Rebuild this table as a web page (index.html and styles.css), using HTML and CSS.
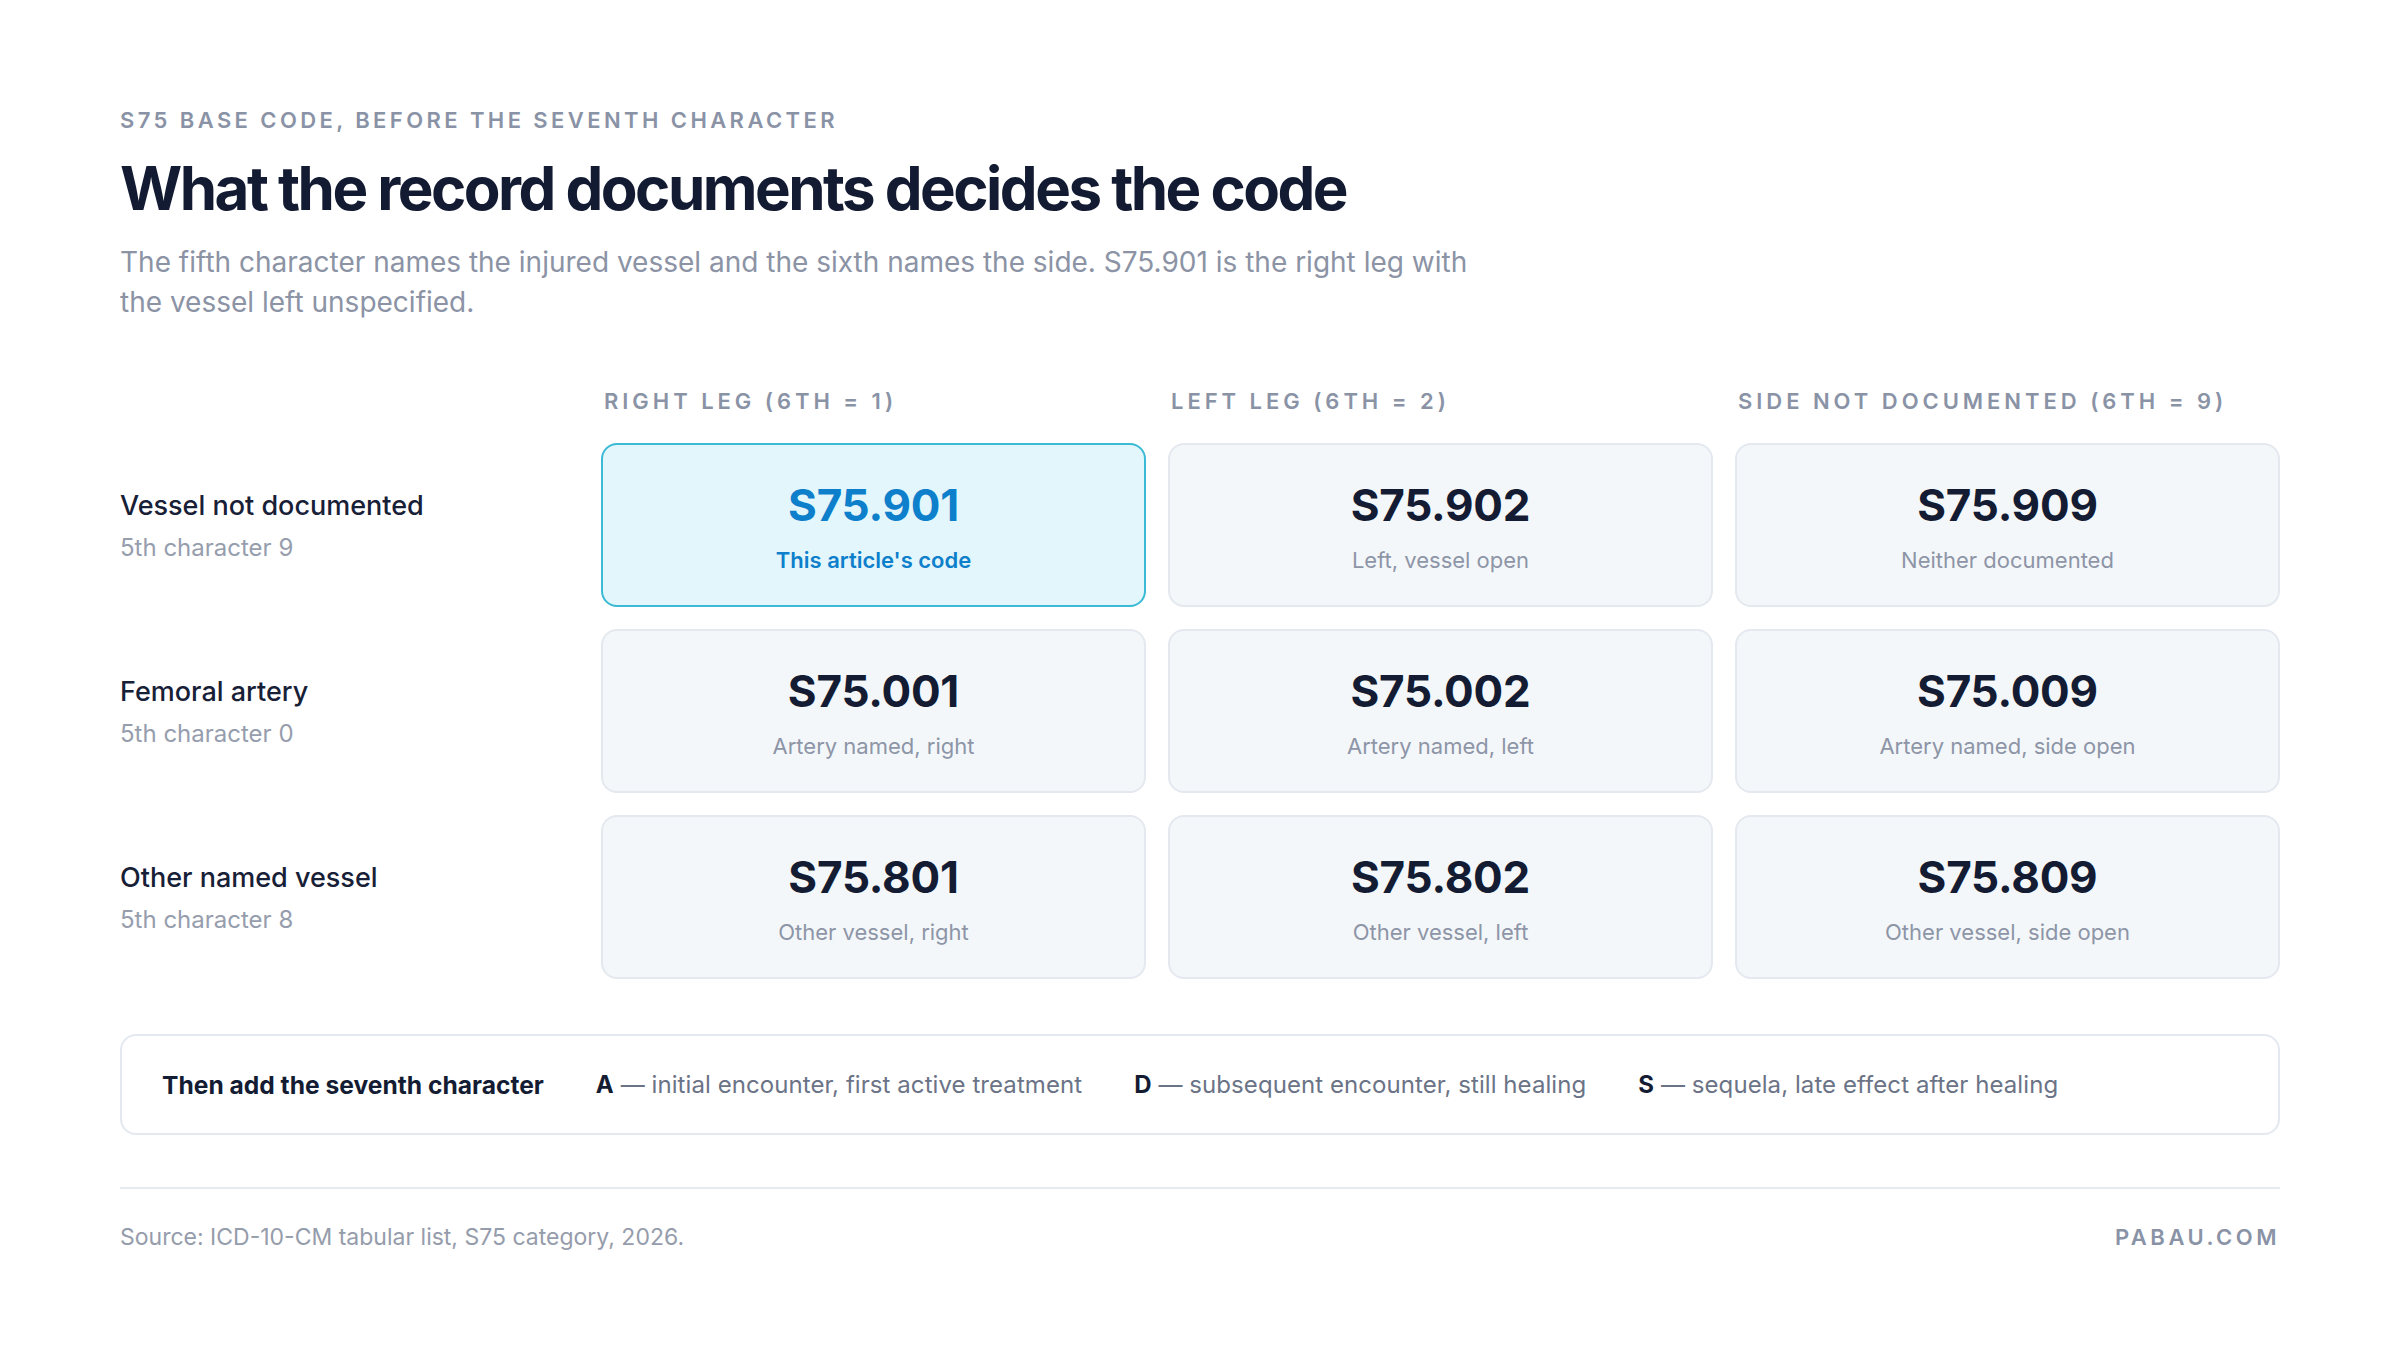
FILE: index.html
```html
<!DOCTYPE html>
<html lang="en">
<head>
<meta charset="utf-8">
<title>S75 base code</title>
<link rel="stylesheet" href="styles.css">
</head>
<body>
<main class="page">
  <p class="eyebrow">S75 base code, before the seventh character</p>
  <h1 class="title">What the record documents decides the code</h1>
  <p class="lede">The fifth character names the injured vessel and the sixth names the side. S75.901 is the right leg with the vessel left unspecified.</p>

  <section class="matrix">
    <div class="corner"></div>
    <div class="col-head">Right leg (6th = 1)</div>
    <div class="col-head">Left leg (6th = 2)</div>
    <div class="col-head">Side not documented (6th = 9)</div>

    <div class="row-head">
      <div class="row-name">Vessel not documented</div>
      <div class="row-sub">5th character 9</div>
    </div>
    <div class="cell cell-active">
      <div class="code">S75.901</div>
      <div class="note">This article's code</div>
    </div>
    <div class="cell">
      <div class="code">S75.902</div>
      <div class="note">Left, vessel open</div>
    </div>
    <div class="cell">
      <div class="code">S75.909</div>
      <div class="note">Neither documented</div>
    </div>

    <div class="row-head">
      <div class="row-name">Femoral artery</div>
      <div class="row-sub">5th character 0</div>
    </div>
    <div class="cell">
      <div class="code">S75.001</div>
      <div class="note">Artery named, right</div>
    </div>
    <div class="cell">
      <div class="code">S75.002</div>
      <div class="note">Artery named, left</div>
    </div>
    <div class="cell">
      <div class="code">S75.009</div>
      <div class="note">Artery named, side open</div>
    </div>

    <div class="row-head">
      <div class="row-name">Other named vessel</div>
      <div class="row-sub">5th character 8</div>
    </div>
    <div class="cell">
      <div class="code">S75.801</div>
      <div class="note">Other vessel, right</div>
    </div>
    <div class="cell">
      <div class="code">S75.802</div>
      <div class="note">Other vessel, left</div>
    </div>
    <div class="cell">
      <div class="code">S75.809</div>
      <div class="note">Other vessel, side open</div>
    </div>
  </section>

  <section class="legend">
    <span class="legend-title">Then add the seventh character</span>
    <span class="legend-item"><b>A</b> — initial encounter, first active treatment</span>
    <span class="legend-item"><b>D</b> — subsequent encounter, still healing</span>
    <span class="legend-item"><b>S</b> — sequela, late effect after healing</span>
  </section>

  <footer class="footer">
    <span class="source">Source: ICD-10-CM tabular list, S75 category, 2026.</span>
    <span class="brand">PABAU.COM</span>
  </footer>
</main>
</body>
</html>
```

FILE: styles.css
```css
* { box-sizing: border-box; }

html, body {
  margin: 0;
  padding: 0;
  background: #ffffff;
}

body {
  width: 2400px;
  height: 1360px;
  font-family: Inter, "Noto Sans", "Liberation Sans", sans-serif;
  color: #141c33;
}

.page {
  padding: 106px 120px 0;
}

.eyebrow {
  margin: 0;
  font-size: 22px;
  line-height: 28px;
  font-weight: 600;
  letter-spacing: 0.155em;
  text-transform: uppercase;
  color: #8a93a6;
}

.title {
  margin: 18px 0 0;
  font-size: 60px;
  line-height: 72px;
  font-weight: 700;
  letter-spacing: -0.042em;
  color: #131b32;
}

.lede {
  margin: 18px 0 0;
  max-width: 1380px;
  font-size: 28px;
  line-height: 40px;
  font-weight: 400;
  color: #8b93a5;
}

.matrix {
  margin-top: 65px;
  display: grid;
  grid-template-columns: 459px 1fr 1fr 1fr;
  grid-template-rows: auto 164px 164px 164px;
  column-gap: 22px;
  row-gap: 22px;
}

.col-head {
  margin-bottom: 6px;
  padding-left: 3px;
  font-size: 22px;
  line-height: 28px;
  font-weight: 600;
  letter-spacing: 0.18em;
  text-transform: uppercase;
  color: #8a93a6;
}

.row-head {
  align-self: center;
  padding-top: 2px;
}

.row-name {
  font-size: 27px;
  line-height: 36px;
  font-weight: 500;
  color: #172036;
}

.row-sub {
  margin-top: 8px;
  font-size: 24px;
  line-height: 32px;
  color: #969dad;
}

.cell {
  display: flex;
  flex-direction: column;
  align-items: center;
  justify-content: center;
  gap: 14px;
  padding-top: 4px;
  background: #f4f7fa;
  border: 2px solid #e4e9ef;
  border-radius: 16px;
}

.cell-active {
  background: #e2f6fb;
  border-color: #3bbad5;
}

.code {
  font-size: 44px;
  line-height: 52px;
  font-weight: 700;
  letter-spacing: -0.005em;
  color: #141c33;
}

.note {
  font-size: 22px;
  line-height: 30px;
  color: #8d95a7;
}

.cell-active .code {
  color: #0d7fcb;
}

.cell-active .note {
  color: #0d7fcb;
  font-weight: 600;
}

.legend {
  margin-top: 55px;
  height: 101px;
  display: flex;
  align-items: center;
  gap: 52px;
  padding: 0 40px;
  border: 2px solid #e4e9ef;
  border-radius: 16px;
  background: #ffffff;
  font-size: 24px;
  line-height: 32px;
  color: #6b7386;
}

.legend-title {
  font-size: 24.6px;
  font-weight: 700;
  color: #141c33;
}

.legend-item {
  letter-spacing: 0.003em;
}

.legend-item b {
  font-weight: 700;
  color: #141c33;
}

.footer {
  margin-top: 52px;
  padding-top: 34px;
  border-top: 2px solid #e6eaef;
  display: flex;
  justify-content: space-between;
  align-items: center;
  font-size: 23px;
  line-height: 28px;
}

.source {
  color: #959cab;
}

.brand {
  font-size: 22px;
  font-weight: 600;
  letter-spacing: 0.16em;
  color: #8a93a6;
}
```
